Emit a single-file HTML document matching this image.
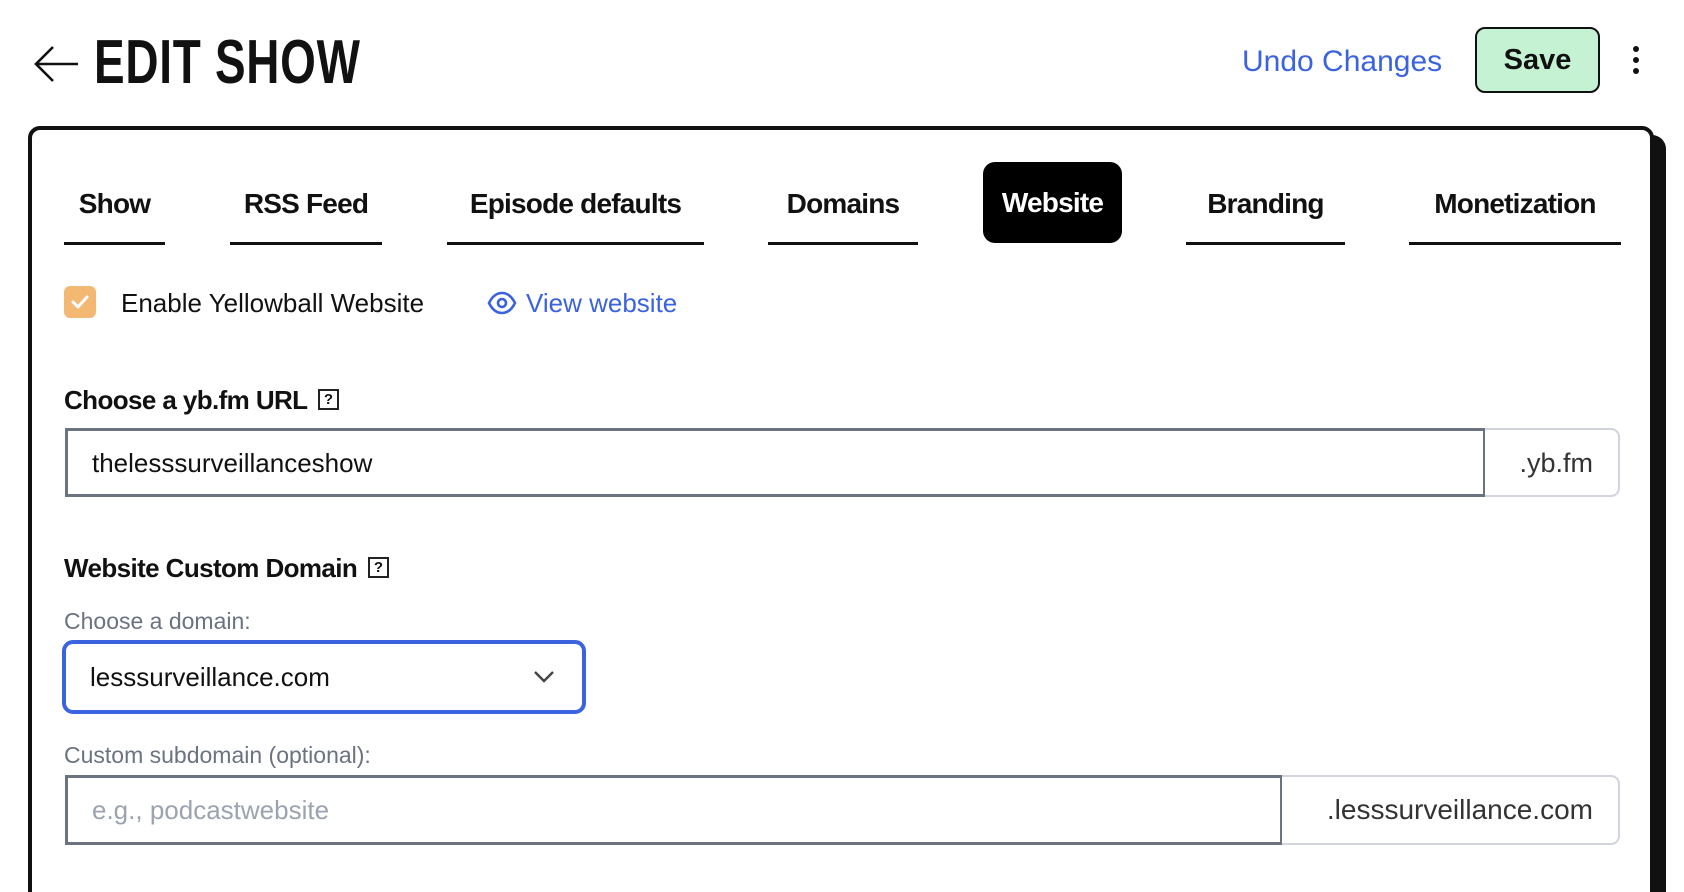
<!DOCTYPE html>
<html><head><meta charset="utf-8"><style>
*{margin:0;padding:0;box-sizing:border-box}
html,body{width:1684px;height:892px;overflow:hidden}
body{background:#fff;font-family:"Liberation Sans",sans-serif;color:#111}
#w{position:relative;width:1684px;height:892px;overflow:hidden}
.a{position:absolute}
.tab{position:absolute;top:178px;height:52px;line-height:52px;text-align:center;font-weight:bold;font-size:28px;letter-spacing:-0.8px;color:#111}
.ul{position:absolute;top:242px;height:3px;background:#111}
.lbl{position:absolute;font-weight:bold;font-size:26px;letter-spacing:-0.6px;color:#111}
.help{position:absolute;width:21px;height:21px;border:2px solid #222;font-size:15px;line-height:17px;text-align:center;font-weight:bold}
.sub{position:absolute;font-size:23px;color:#6b7280}
</style></head><body><div id="w">
<svg class="a" style="left:33px;top:44px" width="48" height="40" viewBox="0 0 48 40"><path d="M45 20H4M20 3L3 20l17 17" fill="none" stroke="#111" stroke-width="2.6"/></svg>
<div class="a" style="left:94px;top:30px;font-size:62px;font-weight:bold;line-height:66px;transform:scaleX(0.74);transform-origin:0 0;white-space:nowrap;letter-spacing:1px">EDIT SHOW</div>
<div class="a" style="left:1242px;top:42px;font-size:30px;color:#3b63e0;line-height:40px">Undo Changes</div>
<div class="a" style="left:1475px;top:27px;width:125px;height:66px;background:#c6f2d4;border:2px solid #111;border-radius:10px;text-align:center;line-height:62px;font-weight:bold;font-size:29px">Save</div>
<div class="a" style="left:1633px;top:46px;width:6px;height:6px;border-radius:50%;background:#111"></div>
<div class="a" style="left:1633px;top:57px;width:6px;height:6px;border-radius:50%;background:#111"></div>
<div class="a" style="left:1633px;top:68px;width:6px;height:6px;border-radius:50%;background:#111"></div>

<div class="a" style="left:40px;top:135px;width:1626px;height:800px;background:#111;border-radius:14px"></div>
<div class="a" style="left:28px;top:126px;width:1626px;height:800px;background:#fff;border:4px solid #111;border-radius:12px"></div>

<div class="tab" style="left:64px;width:101px">Show</div><div class="ul" style="left:64px;width:101px"></div>
<div class="tab" style="left:230px;width:152px">RSS Feed</div><div class="ul" style="left:230px;width:152px"></div>
<div class="tab" style="left:447px;width:257px">Episode defaults</div><div class="ul" style="left:447px;width:257px"></div>
<div class="tab" style="left:768px;width:150px">Domains</div><div class="ul" style="left:768px;width:150px"></div>
<div class="a" style="left:983px;top:162px;width:139px;height:81px;background:#000;border-radius:12px;color:#fff;text-align:center;line-height:81px;font-weight:bold;font-size:28px;letter-spacing:-0.8px">Website</div>
<div class="tab" style="left:1186px;width:159px">Branding</div><div class="ul" style="left:1186px;width:159px"></div>
<div class="tab" style="left:1409px;width:212px">Monetization</div><div class="ul" style="left:1409px;width:212px"></div>

<div class="a" style="left:64px;top:286px;width:32px;height:32px;background:#f3b872;border-radius:6px"></div>
<svg class="a" style="left:64px;top:286px" width="32" height="32"><path d="M9 16l5 5 9-10" fill="none" stroke="#fff" stroke-width="3" stroke-linecap="round" stroke-linejoin="round"/></svg>
<div class="a" style="left:121px;top:286px;font-size:26px;line-height:34px">Enable Yellowball Website</div>
<svg class="a" style="left:487px;top:290px" width="30" height="26" viewBox="0 0 30 26"><path d="M2 13C6 5 11 3 15 3s9 2 13 10c-4 8-9 10-13 10S6 21 2 13z" fill="none" stroke="#3b63e0" stroke-width="2.6"/><circle cx="15" cy="13" r="4" fill="none" stroke="#3b63e0" stroke-width="2.6"/></svg>
<div class="a" style="left:526px;top:286px;font-size:26px;line-height:34px;color:#3b63e0">View website</div>

<div class="lbl" style="left:64px;top:385px">Choose a yb.fm URL</div>
<div class="help" style="left:318px;top:389px">?</div>
<div class="a" style="left:65px;top:428px;width:1555px;height:69px;border:2px solid #d1d5db;border-radius:0 9px 9px 0"></div>
<div class="a" style="left:65px;top:428px;width:1420px;height:69px;border:3px solid #6b7280;border-right-width:2px"></div>
<div class="a" style="left:92px;top:446px;font-size:26px;line-height:34px">thelesssurveillanceshow</div>
<div class="a" style="left:1485px;top:446px;width:108px;text-align:right;font-size:27px;line-height:34px;color:#333">.yb.fm</div>

<div class="lbl" style="left:64px;top:553px">Website Custom Domain</div>
<div class="help" style="left:368px;top:557px">?</div>
<div class="sub" style="left:64px;top:608px">Choose a domain:</div>
<div class="a" style="left:62px;top:640px;width:524px;height:74px;border:4px solid #3b63e0;border-radius:11px"></div>
<div class="a" style="left:90px;top:660px;font-size:26px;line-height:34px">lesssurveillance.com</div>
<svg class="a" style="left:533px;top:669px" width="22" height="16"><path d="M2 3l9 9 9-9" fill="none" stroke="#444" stroke-width="2.4"/></svg>
<div class="sub" style="left:64px;top:742px">Custom subdomain (optional):</div>
<div class="a" style="left:65px;top:775px;width:1555px;height:70px;border:2px solid #d1d5db;border-radius:0 9px 9px 0"></div>
<div class="a" style="left:65px;top:775px;width:1217px;height:70px;border:3px solid #6b7280;border-right-width:2px"></div>
<div class="a" style="left:92px;top:793px;font-size:26px;line-height:34px;color:#9ca3af">e.g., podcastwebsite</div>
<div class="a" style="left:1282px;top:793px;width:311px;text-align:right;font-size:28px;line-height:34px;color:#333">.lesssurveillance.com</div>
</div></body></html>
